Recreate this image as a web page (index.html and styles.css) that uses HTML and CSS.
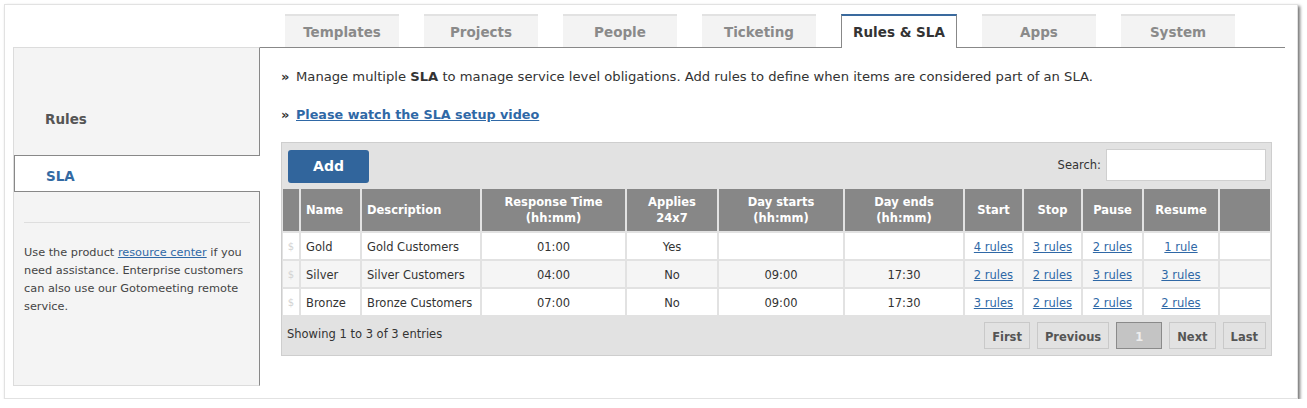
FILE: index.html
```html
<!DOCTYPE html>
<html>
<head>
<meta charset="utf-8">
<title>Rules &amp; SLA</title>
<link rel="stylesheet" href="styles.css">
</head>
<body>
<div class="panel">
  <div class="tabs">
    <div class="tab">Templates</div>
    <div class="tab">Projects</div>
    <div class="tab">People</div>
    <div class="tab">Ticketing</div>
    <div class="tab active">Rules &amp; SLA</div>
    <div class="tab">Apps</div>
    <div class="tab">System</div>
  </div>
  <div class="layout">
    <aside class="sidebar">
      <nav class="side-nav">
        <div class="side-item">Rules</div>
        <div class="side-item current">SLA</div>
      </nav>
      <hr class="side-divider">
      <p class="side-help">Use the product <a href="#" class="link">resource center</a> if you need assistance. Enterprise customers can also use our Gotomeeting remote service.</p>
    </aside>
    <main class="main">
      <p class="intro"><span class="raquo">&raquo;</span><span class="txt">Manage multiple <b>SLA</b> to manage service level obligations. Add rules to define when items are considered part of an SLA.</span></p>
      <p class="video"><span class="raquo">&raquo;</span><a href="#" class="link txt">Please watch the SLA setup video</a></p>
      <div class="dt-box">
        <div class="dt-top">
          <button class="btn-add">Add</button>
          <label class="search">Search: <input type="text" class="search-input"></label>
        </div>
        <table class="dt">
          <thead>
            <tr>
              <th class="c-icon"></th>
              <th class="c-name left">Name</th>
              <th class="c-desc left">Description</th>
              <th class="c-resp">Response Time<br>(hh:mm)</th>
              <th class="c-app">Applies<br>24x7</th>
              <th class="c-ds">Day starts<br>(hh:mm)</th>
              <th class="c-de">Day ends<br>(hh:mm)</th>
              <th class="c-start">Start</th>
              <th class="c-stop">Stop</th>
              <th class="c-pause">Pause</th>
              <th class="c-resume">Resume</th>
              <th class="c-last"></th>
            </tr>
          </thead>
          <tbody>
            <tr>
              <td class="icon">$</td>
              <td class="left">Gold</td>
              <td class="left">Gold Customers</td>
              <td>01:00</td>
              <td>Yes</td>
              <td></td>
              <td></td>
              <td><a href="#" class="link">4 rules</a></td>
              <td><a href="#" class="link">3 rules</a></td>
              <td><a href="#" class="link">2 rules</a></td>
              <td><a href="#" class="link">1 rule</a></td>
              <td></td>
            </tr>
            <tr class="even">
              <td class="icon">$</td>
              <td class="left">Silver</td>
              <td class="left">Silver Customers</td>
              <td>04:00</td>
              <td>No</td>
              <td>09:00</td>
              <td>17:30</td>
              <td><a href="#" class="link">2 rules</a></td>
              <td><a href="#" class="link">2 rules</a></td>
              <td><a href="#" class="link">3 rules</a></td>
              <td><a href="#" class="link">3 rules</a></td>
              <td></td>
            </tr>
            <tr>
              <td class="icon">$</td>
              <td class="left">Bronze</td>
              <td class="left">Bronze Customers</td>
              <td>07:00</td>
              <td>No</td>
              <td>09:00</td>
              <td>17:30</td>
              <td><a href="#" class="link">3 rules</a></td>
              <td><a href="#" class="link">2 rules</a></td>
              <td><a href="#" class="link">2 rules</a></td>
              <td><a href="#" class="link">2 rules</a></td>
              <td></td>
            </tr>
          </tbody>
        </table>
        <div class="dt-foot">
          <div class="dt-info">Showing 1 to 3 of 3 entries</div>
          <div class="pager">
            <span class="pg">First</span>
            <span class="pg">Previous</span>
            <span class="pg current">1</span>
            <span class="pg">Next</span>
            <span class="pg">Last</span>
          </div>
        </div>
      </div>
    </main>
  </div>
</div>
</body>
</html>
```

FILE: styles.css
```css
* { box-sizing: border-box; }
html, body { margin: 0; padding: 0; background: #ffffff; }
body {
  font-family: "DejaVu Sans", Verdana, sans-serif;
  color: #333;
}
.panel {
  margin: 4px 0 0 4px;
  width: 1294px;
  height: 395px;
  background: #fff;
  border: 1px solid #e2e2e2;
  box-shadow: 2px 2px 3px rgba(0,0,0,0.55);
  padding: 9px 12px 0 8px;
}
.link { color: #2f68a6; text-decoration: underline; }

/* Tabs */
.tabs {
  display: flex;
  gap: 25px;
  margin-left: 246px;
  padding-left: 26px;
  border-bottom: 1px solid #888;
  height: 34px;
}
.tab {
  width: 114px;
  height: 33px;
  background: #f3f3f3;
  border-top: 2px solid #e2e2e2;
  color: #8a8a8a;
  font-weight: bold;
  font-size: 13.5px;
  display: flex;
  align-items: center;
  justify-content: center;
  padding-top: 1px;
}
.tab.active {
  width: 116px;
  height: 34px;
  background: #fff;
  border-top: 2px solid #3a6a9e;
  border-left: 1px solid #888;
  border-right: 1px solid #888;
  color: #333;
  margin-bottom: -1px;
  padding-top: 0;
}

/* Layout */
.layout { display: flex; }
.sidebar {
  width: 247px;
  height: 339px;
  margin-top: -1px;
  background: #f4f4f4;
  border: 1px solid #dcdcdc;
  border-right-color: #888;
}
.side-nav { padding-top: 52px; }
.side-item {
  height: 36px;
  line-height: 38px;
  padding-left: 31px;
  font-size: 13.5px;
  font-weight: bold;
  color: #555;
  margin-bottom: 19px;
}
.side-item.current {
  height: 37px;
  line-height: 40px;
  background: #fff;
  border: 1px solid #888;
  border-right: none;
  margin-right: -1px;
  position: relative;
  color: #336aa3;
  margin-bottom: 0;
}
.side-divider {
  border: none;
  border-top: 1px solid #dedede;
  margin: 30px 9px 21px 10px;
  height: 0;
}
.side-help {
  margin: 0;
  padding: 0 10px;
  font-size: 11.3px;
  line-height: 18px;
  color: #444;
}

.main {
  flex: 1;
  padding: 21px 13px 0 21px;
}
.intro, .video {
  margin: 0;
  line-height: 16px;
  display: flex;
  align-items: baseline;
}
.intro { font-size: 13.15px; }
.video { margin-top: 22px; font-weight: bold; font-size: 12.75px; }
.raquo { font-weight: bold; font-size: 13px; width: 15px; flex: none; }

/* Data table box */
.dt-box {
  margin-top: 19px;
  background: #e2e2e2;
  border: 1px solid #cecece;
  font-size: 11.5px;
}
.dt-top {
  display: flex;
  justify-content: space-between;
  align-items: flex-start;
  padding: 7px 5px 0 6px;
  height: 44px;
}
.btn-add {
  width: 81px;
  height: 33px;
  border: none;
  border-radius: 3px;
  background: #31659c;
  color: #fff;
  font-family: inherit;
  font-weight: bold;
  font-size: 14px;
  padding: 0 0 1px 0;
}
.search {
  display: flex;
  align-items: center;
  gap: 5px;
  color: #333;
  margin-top: -1px;
}
.search-input {
  width: 160px;
  height: 32px;
  border: 1px solid #cfcfcf;
  background: #fff;
}
.dt {
  width: calc(100% + 2px);
  margin: 0 -1px;
  border-collapse: separate;
  border-spacing: 2px;
  table-layout: fixed;
}
.dt th {
  background: #878787;
  color: #fff;
  font-weight: bold;
  height: 42px;
  padding: 0 5px;
  line-height: 16px;
  text-align: center;
  font-size: 11.5px;
}
.dt td {
  background: #fff;
  height: 26px;
  padding: 1px 5px 0;
  text-align: center;
  color: #333;
}
.dt tr.even td { background: #f5f5f5; }
.dt .left { text-align: left; }
.dt td.icon { color: #d3d3d3; font-size: 10px; padding: 0; }
.c-icon { width: 16px; }
.c-name { width: 59px; }
.c-desc { width: 118px; }
.c-resp { width: 143px; }
.c-app { width: 90px; }
.c-ds { width: 124px; }
.c-de { width: 118px; }
.c-start { width: 57px; }
.c-stop { width: 57px; }
.c-pause { width: 59px; }
.c-resume { width: 74px; }

.dt-foot {
  display: flex;
  justify-content: space-between;
  align-items: center;
  padding: 5px 5px 6px 5px;
}
.dt-info { color: #333; margin-top: -3px; }
.pager { display: flex; gap: 7px; }
.pg {
  height: 27px;
  padding: 2px 7px 0;
  border: 1px solid #c9c9c9;
  background: #e2e2e2;
  color: #555;
  font-weight: bold;
  display: flex;
  align-items: center;
  justify-content: center;
}
.pg.current {
  width: 46px;
  background: #c4c4c4;
  border-color: #8a8a8a;
  color: #eee;
}
```
